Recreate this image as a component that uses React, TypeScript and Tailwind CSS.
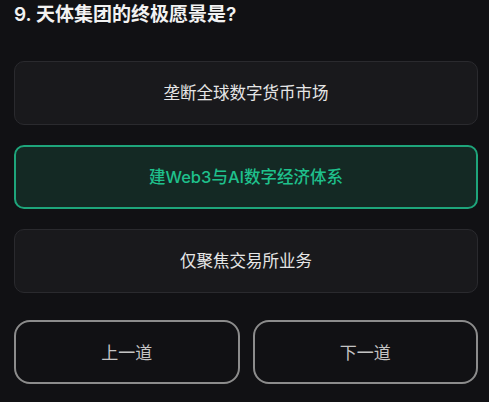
import React from "react";

const font = { fontFamily: 'Inter, "Noto Sans CJK SC", sans-serif' };

export default function App() {
  return (
    <div className="w-[489px] h-[402px] bg-[#111114] pl-[14px] pr-[11px] overflow-hidden" style={font}>
      <h1 className="text-[19px] leading-[28px] font-semibold text-[#f2f2f2] pt-[1px]">9. 天体集团的终极愿景是?</h1>
      <div className="mt-[32px] flex flex-col gap-[20px]">
        <div className="h-[64px] rounded-[10px] border border-[#2a2a2e] bg-[#19191c] flex items-center justify-center text-[16.5px] text-[#e6e6e6]">
          垄断全球数字货币市场
        </div>
        <div className="h-[64px] rounded-[10px] border-2 border-[#1ea57b] bg-[#142924] flex items-center justify-center text-[16.5px] font-medium text-[#1fc08c]">
          建Web3与AI数字经济体系
        </div>
        <div className="h-[64px] rounded-[10px] border border-[#2a2a2e] bg-[#19191c] flex items-center justify-center text-[16.5px] text-[#e6e6e6]">
          仅聚焦交易所业务
        </div>
      </div>
      <div className="mt-[27px] grid grid-cols-2 gap-[13px]">
        <button className="h-[64px] rounded-[16px] border-2 border-[#8c8c8c] bg-transparent text-[17px] text-[#c4c4c4] pt-[3px]">上一道</button>
        <button className="h-[64px] rounded-[16px] border-2 border-[#8c8c8c] bg-transparent text-[17px] text-[#c4c4c4] pt-[3px]">下一道</button>
      </div>
    </div>
  );
}
